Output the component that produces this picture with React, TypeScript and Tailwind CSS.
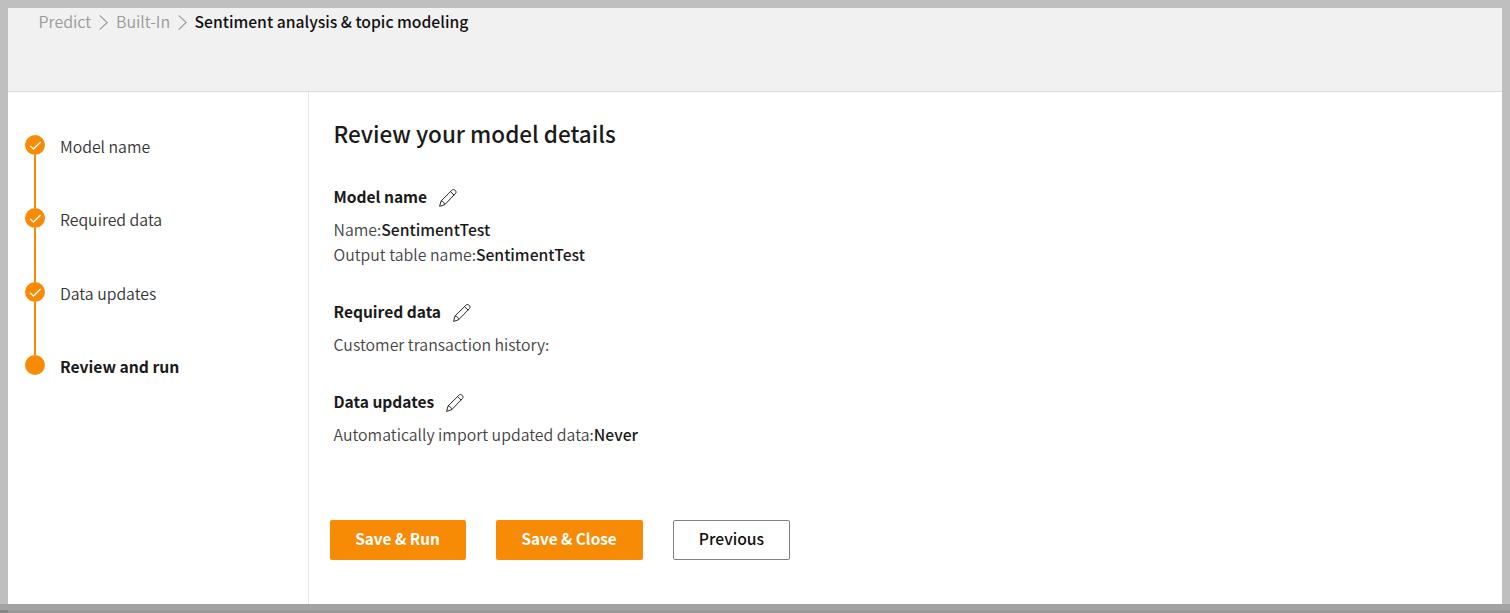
import React from "react";

function Chevron() {
  return (
    <svg className="h-[15px] w-[9px] shrink-0" viewBox="0 0 9 15" fill="none" stroke="#999" strokeWidth="1.1">
      <path d="M.6.4 8.2 7.5.6 14.6" />
    </svg>
  );
}

function Pencil() {
  return (
    <svg className="h-[18px] w-[18px] shrink-0" viewBox="0 0 18 18" fill="none" stroke="#2a2a2a" strokeWidth="1" strokeLinejoin="round">
      <path d="M.6 17.4 2 12 12.9 1.200c1-1 2.300-.9 3.300.1s1.200 2.300.2 3.300L5.700 15.700Z" />
      <path d="M2 12c1.700-.1 3.600 1.800 3.700 3.700M11.500 2.600l3.700 3.600" />
    </svg>
  );
}

const steps = [
  { label: "Model name", done: true, row: "h-[73px]" },
  { label: "Required data", done: true, row: "h-[74px]" },
  { label: "Data updates", done: true, row: "h-[73px]" },
  { label: "Review and run", done: false, row: "h-[20px]" },
];

function Sidebar() {
  return (
    <aside className="w-[301px] shrink-0 border-r border-[#e6e6e6] pt-[43px] pl-[17px]">
      {steps.map((s) => (
        <div key={s.label} className={`flex ${s.row}`}>
          <div className="flex w-5 flex-col items-center">
            <span className="flex size-5 shrink-0 items-center justify-center rounded-full bg-[#f88b06]">
              {s.done && (
                <svg className="size-5" viewBox="0 0 20 20" fill="none" stroke="#fff" strokeWidth="1.3">
                  <path d="M5.200 10.900 8.400 14 15.600 7" />
                </svg>
              )}
            </span>
            {s.done && <span className="w-0.5 grow bg-[#f88b06]" />}
          </div>
          <span
            className={
              s.done
                ? "mt-0.5 ml-[15px] h-5 text-[15.800px] leading-5 font-[350] whitespace-nowrap text-[#333]"
                : "mt-0.5 ml-[15px] h-5 text-[15.700px] leading-5 font-bold whitespace-nowrap text-[#1a1a1a]"
            }
          >
            {s.label}
          </span>
        </div>
      ))}
    </aside>
  );
}

function Section({ title, rows, className }: { title: string; rows: [string, string][]; className: string }) {
  return (
    <section className={className}>
      <div className="flex h-5 items-end gap-3">
        <h2 className="mb-0.5 text-[15.550px] leading-5 font-bold text-[#1a1a1a]">{title}</h2>
        <span className="mb-px"><Pencil /></span>
      </div>
      <div className="mt-[9px]">
        {rows.map(([k, v]) => (
          <p key={k} className="h-[25px] text-[15.850px] leading-[25px] font-[350] text-[#444]">
            {k}
            <span className="text-[15.700px] font-medium text-[#1a1a1a]">{v}</span>
          </p>
        ))}
      </div>
    </section>
  );
}

export default function App() {
  return (
    <div className="flex h-[613px] w-[1510px] flex-col overflow-hidden bg-[#bfbfbf] pt-2 font-['Noto_Sans_CJK_SC',sans-serif]">
      <div className="mx-2 flex h-[596px] flex-col bg-white">
        <header className="h-[84px] shrink-0 border-b border-[#dadada] bg-[#f1f1f1] pl-[30.500px]">
          <nav className="flex h-7 items-center text-[16px] leading-[26px] font-[350] whitespace-nowrap text-[#999]">
            <span className="-mt-0.5 w-[52.500px]">Predict</span>
            <span className="mr-2 ml-[8px] flex"><Chevron /></span>
            <span className="-mt-0.5 w-[54px]">Built-In</span>
            <span className="mr-[7.500px] ml-[8px] flex"><Chevron /></span>
            <span className="text-[15.700px] font-medium text-[#111]">Sentiment analysis &amp; topic modeling</span>
          </nav>
        </header>
        <div className="flex grow">
          <Sidebar />
          <main className="pl-[24.500px]">
            <h1 className="mt-[23px] h-9 text-[22.500px] leading-9 font-medium text-[#1a1a1a]">Review your model details</h1>
            <Section className="mt-[37px]" title="Model name" rows={[["Name:", "SentimentTest"], ["Output table name:", "SentimentTest"]]} />
            <Section className="mt-[36px]" title="Required data" rows={[["Customer transaction history:", ""]]} />
            <Section className="mt-[36px]" title="Data updates" rows={[["Automatically import updated data:", "Never"]]} />
            <div className="mt-[73px] -ml-[3.500px] flex gap-[30px] text-[15.300px] whitespace-nowrap">
              <button className="h-10 w-[136px] rounded-[2px] bg-[#f88b06] pr-px pb-[3px] font-bold text-white">Save &amp; Run</button>
              <button className="h-10 w-[147px] rounded-[2px] bg-[#f88b06] pr-px pb-[3px] font-bold text-white">Save &amp; Close</button>
              <button className="h-10 w-[117px] rounded-[2px] border border-[#808080] pb-[3px] text-[15.700px] font-medium text-[#111]">Previous</button>
            </div>
          </main>
        </div>
      </div>
      <div className="h-1.5 shrink-0 bg-[#a3a3a3]" />
      <div className="flex h-[3px] shrink-0 bg-[#999]">
        <span className="w-2 bg-[#858585]" />
      </div>
    </div>
  );
}
